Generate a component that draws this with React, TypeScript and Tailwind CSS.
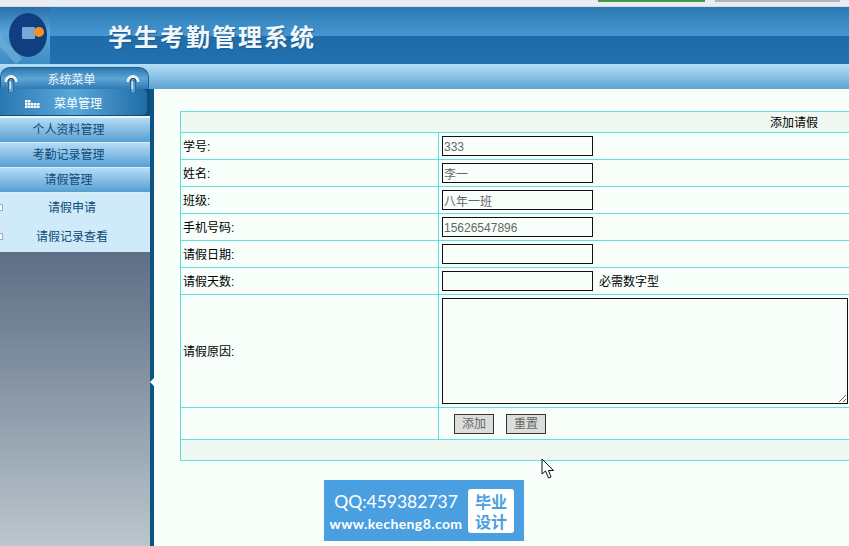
import React from "react";

const cjk = "font-['Liberation_Sans','Noto_Sans_CJK_SC',sans-serif]";

function Ring() {
  return (
    <svg width="14" height="20" viewBox="0 0 14 20" className="block">
      <path d="M2 9 A5 5.500 0 0 1 12 9" fill="none" stroke="#eef3f6" strokeWidth="3" />
      <path d="M4 9 A3 3.500 0 0 1 10 9" fill="none" stroke="#33495a" strokeWidth="1.2" />
      <rect x="4.500" y="8" width="5" height="12" rx="2" fill="#5fa2cf" stroke="#1d5c8c" strokeWidth="0.8" />
      <rect x="5.500" y="8" width="1.500" height="8" fill="#cfe3f0" />
    </svg>
  );
}

function Logo() {
  return (
    <svg width="50" height="57" viewBox="0 0 50 57" className="block shrink-0">
      <defs>
        <linearGradient id="lg" x1="0" y1="0" x2="0" y2="1">
          <stop offset="0" stopColor="#2a6ea8" />
          <stop offset="0.45" stopColor="#5aa6dc" />
          <stop offset="1" stopColor="#3e8ac2" />
        </linearGradient>
      </defs>
      <rect width="50" height="57" fill="url(#lg)" />
      <path d="M0 28 L22 52 L16 57 L0 40Z" fill="#6eaed8" opacity="0.7" />
      <ellipse cx="28" cy="28" rx="19" ry="22" fill="#0f3f80" />
      <rect x="22" y="20" width="13" height="12" rx="1" fill="#7aa8d6" />
      <circle cx="39" cy="25" r="5" fill="#f5931e" />
    </svg>
  );
}

function GridIcon() {
  return (
    <svg width="16" height="8" viewBox="0 0 16 8" className="block" fill="#fff">
      {[0, 3, 6].map((y) =>
        [0, 3, 6, 9, 12].map((x) =>
          y === 0 && x > 3 ? null : <rect key={`${x}-${y}`} x={x} y={y} width="2.5" height="2.5" />
        )
      )}
    </svg>
  );
}

function MenuHead({ label, h }: { label: string; h: string }) {
  return (
    <div className={`${h} flex items-center justify-center pr-[13px] bg-gradient-to-b from-[#b5dcf5] to-[#559fd2] text-[12px] text-[#0d4a78] border-b border-[#d9eefa]`}>
      {label}
    </div>
  );
}

function Row({ label, value, note, h }: { label: string; value?: string; note?: string; h: string }) {
  return (
    <tr className={h}>
      <td className="border border-[#5fdfe0] pl-[2px] pt-px text-[12px] text-black">{label}</td>
      <td className="border border-[#5fdfe0] pl-[3px] text-[12px] text-black">
        <div className="flex items-center gap-[6px]">
          <input
            readOnly
            value={value ?? ""}
            className="w-[151px] h-[20px] border border-[#111] bg-[#f8fffb] px-px pt-px text-[12px] text-[#666] outline-none"
          />
          {note && <span className="pt-px">{note}</span>}
        </div>
      </td>
    </tr>
  );
}

export default function App() {
  return (
    <div className={`${cjk} w-[849px] h-[546px] overflow-hidden flex flex-col bg-[#f8fffb] relative`}>
      {/* Top strip */}
      <div className="h-[7px] shrink-0 bg-[#e9edf2] border-b border-[#d3dce6] relative">
        <div className="absolute left-[598px] top-0 w-[107px] h-[2px] bg-[#3f9a45]" />
        <div className="absolute left-[715px] top-0 w-[125px] h-[2px] bg-[#b4b6b6]" />
      </div>

      {/* Header */}
      <div className="h-[57px] shrink-0 flex bg-[linear-gradient(to_bottom,#2c7ab4_0%,#4597d1_50%,#206cab_51%,#2270ad_100%)]">
        <Logo />
        <div className="pl-[58px] pt-[13px] text-[24px] leading-[36px] tracking-[2px] font-bold text-[#f1f7fb] [text-shadow:1px_1px_1px_#1b5d8e]">
          学生考勤管理系统
        </div>
      </div>

      {/* Bar */}
      <div className="h-[25px] shrink-0 bg-gradient-to-b from-[#b4dff8] to-[#5ca3d2] flex relative z-10">
        <div className="relative w-[149px] mt-[3px] h-[22px] pr-[6px] pt-[2px] rounded-t-[10px] border border-b-0 border-[#1d5f92] bg-gradient-to-b from-[#2a76ad] via-[#5da6d6] to-[#2d7bb3] flex items-center justify-center text-[12px] text-[#e8f4fb]">
          系统菜单
          <div className="absolute left-[3px] top-[5px]"><Ring /></div>
          <div className="absolute left-[125px] top-[5px]"><Ring /></div>
        </div>
      </div>

      {/* Body */}
      <div className="flex-1 flex min-h-0">
        {/* Sidebar */}
        <div className="w-[154px] shrink-0 flex flex-col border-r-[4px] border-[#0e5482] bg-[#e9f5fb] relative">
          <div className="h-[27px] pr-[3px] bg-[#0c4f7e]">
            <div className="h-[26px] pt-[3px] rounded-r-[5px] bg-gradient-to-r from-[#2a78b2] via-[#5aa9da] to-[#1f6ca6] flex items-center text-[12px] text-white">
              <div className="ml-[25px] w-[29px]"><GridIcon /></div>
              <span>菜单管理</span>
            </div>
          </div>
          <div className="h-[2px]" />
          <MenuHead label="个人资料管理" h="h-[25px]" />
          <MenuHead label="考勤记录管理" h="h-[25px]" />
          <MenuHead label="请假管理" h="h-[25px]" />
          <div className="h-[59px] pr-[6px] bg-[#cfeaf8] text-[12px] text-[#0d4a78] relative">
            <div className="h-[29px] flex items-center justify-center">请假申请</div>
            <div className="h-[30px] flex items-center justify-center">请假记录查看</div>
            <div className="absolute left-0 top-[11px] w-[3px] h-[7px] bg-white border border-l-0 border-[#9ab]" />
            <div className="absolute left-0 top-[40px] w-[3px] h-[7px] bg-white border border-l-0 border-[#9ab]" />
          </div>
          <div className="flex-1 bg-gradient-to-b from-[#5d6f85] to-[#bcc6cd]" />
          <div className="absolute right-[-4px] top-[289px] w-0 h-0 border-y-[4px] border-y-transparent border-r-[4px] border-r-white" />
        </div>

        {/* Content */}
        <div className="flex-1 min-w-0 pl-[26px] pt-[22px]">
          <table className="w-[1228px] border-collapse table-fixed">
            <colgroup>
              <col className="w-[258px]" />
              <col />
            </colgroup>
            <tbody>
              <tr className="h-[21px]">
                <td colSpan={2} className="border border-[#5fdfe0] bg-[#f0f8f2] pt-px text-center text-[12px] text-black">
                  添加请假
                </td>
              </tr>
              <Row h="h-[27px]" label="学号:" value="333" />
              <Row h="h-[27px]" label="姓名:" value="李一" />
              <Row h="h-[27px]" label="班级:" value="八年一班" />
              <Row h="h-[27px]" label="手机号码:" value="15626547896" />
              <Row h="h-[27px]" label="请假日期:" />
              <Row h="h-[27px]" label="请假天数:" note="必需数字型" />
              <tr className="h-[113px]">
                <td className="border border-[#5fdfe0] pl-[2px] pt-px text-[12px] text-black">请假原因:</td>
                <td className="border border-[#5fdfe0] pl-[3px] align-top pt-[3px]">
                  <textarea readOnly className="block w-[406px] h-[106px] border border-[#111] bg-[#f8fffb] outline-none" />
                </td>
              </tr>
              <tr className="h-[32px]">
                <td className="border border-[#5fdfe0]" />
                <td className="border border-[#5fdfe0] pl-[15px]">
                  <div className="flex gap-[12px]">
                    <button className="w-[40px] h-[20px] border border-[#333] bg-[#dcdedc] text-[12px] text-[#666]">添加</button>
                    <button className="w-[40px] h-[20px] border border-[#333] bg-[#dcdedc] text-[12px] text-[#666]">重置</button>
                  </div>
                </td>
              </tr>
              <tr className="h-[21px]">
                <td colSpan={2} className="border border-[#5fdfe0] bg-[#f0f8f2]" />
              </tr>
            </tbody>
          </table>
        </div>
      </div>

      {/* Cursor */}
      <svg width="14" height="22" viewBox="0 0 14 22" className="absolute left-[541px] top-[458px]">
        <path d="M1 1 L1 16 L4.500 13 L7.500 20 L10 19 L7.500 12.500 L12.500 12.500 Z" fill="#fff" stroke="#111" strokeWidth="1" />
      </svg>

      {/* Watermark */}
      <div className="absolute left-[324px] top-[480px] w-[200px] h-[61px] bg-[#4a9fe0] flex items-center">
        <div className="w-[144px] pt-[3px] flex flex-col items-center text-white font-['Lato',sans-serif]">
          <span className="text-[17.5px] leading-[24px]">QQ:459382737</span>
          <span className="text-[14px] leading-[20px] font-bold tracking-[0.4px]">www.kecheng8.com</span>
        </div>
        <div className={`${cjk} w-[46px] h-[44px] pt-[5px] bg-white rounded-[3px] flex flex-col items-center justify-center text-[#4a9fe0] text-[16px] leading-[20px] font-bold`}>
          <span>毕业</span>
          <span>设计</span>
        </div>
      </div>
    </div>
  );
}
